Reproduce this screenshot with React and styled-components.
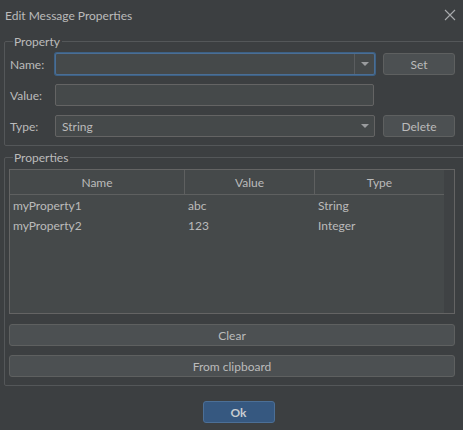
import React from 'react';
import styled, { createGlobalStyle } from 'styled-components';

const GlobalStyle = createGlobalStyle`
  html, body {
    margin: 0;
    padding: 0;
    background: #3c3f41;
  }
  * {
    box-sizing: border-box;
  }
`;

const Dialog = styled.div`
  width: 463px;
  height: 430px;
  overflow: hidden;
  background: #3c3f41;
  color: #bbbbbb;
  font-family: Lato, 'Noto Sans', sans-serif;
  font-size: 12px;
  display: flex;
  flex-direction: column;
`;

const TitleBar = styled.div`
  height: 30px;
  flex: 0 0 30px;
  display: flex;
  align-items: center;
  justify-content: space-between;
  padding: 0 7px 0 5px;
  font-size: 12px;
  color: #bbbbbb;
`;

const CloseButton = styled.button`
  width: 12px;
  height: 12px;
  padding: 0;
  border: 0;
  background: none;
  display: flex;
`;

const Content = styled.div`
  padding: 4px 0 0 4px;
  display: flex;
  flex-direction: column;
`;

const Group = styled.fieldset`
  margin: ${p => p.$top || 0}px -20px 0 0;
  padding: 4px 0 8px 4px;
  border: 1px solid #545759;
  border-radius: 2px;
  min-width: 0;
  display: flex;
  flex-direction: column;
  gap: 9px;
`;

const Legend = styled.legend`
  padding: 0 2px 0 1px;
  margin-left: 4px;
  line-height: 15px;
  font-size: 12px;
  color: #bbbbbb;
`;

const FieldRow = styled.div`
  display: grid;
  grid-template-columns: 46px 320px 72px;
  align-items: center;
  height: 22px;
`;

const Label = styled.label`
  padding-left: 1px;
`;

const Field = styled.div`
  height: 22px;
  width: ${p => p.$width || 320}px;
  background: #45494a;
  border: 1px solid ${p => (p.$focused ? '#4a6e95' : '#646464')};
  border-radius: 2px;
  box-shadow: ${p => (p.$focused ? '0 0 0 1px #3d6185' : 'none')};
  display: flex;
  align-items: center;
  padding-left: 6px;
`;

const FieldText = styled.span`
  flex: 1;
`;

const ArrowBox = styled.div`
  width: 20px;
  height: 100%;
  display: flex;
  align-items: center;
  justify-content: center;
  border-left: 1px solid ${p => (p.$divided ? '#5a5d5f' : 'transparent')};
`;

const Arrow = styled.div`
  width: 0;
  height: 0;
  border-left: 4px solid transparent;
  border-right: 4px solid transparent;
  border-top: 4px solid #9a9c9e;
`;

const Button = styled.button`
  height: 22px;
  width: ${p => (p.$full ? '446px' : '72px')};
  margin-left: ${p => (p.$full ? 0 : 8)}px;
  background: ${p => (p.$primary ? '#365880' : '#4c5052')};
  border: 1px solid ${p => (p.$primary ? '#4c6f96' : '#5e6060')};
  border-radius: 3px;
  color: ${p => (p.$primary ? '#c8ccd0' : '#bbbbbb')};
  font-family: inherit;
  font-size: 12px;
  font-weight: ${p => (p.$primary ? 700 : 400)};
  padding: 0;
`;

const Table = styled.div`
  width: 446px;
  height: 145px;
  border: 1px solid #646464;
  background: #45494a;
  display: flex;
`;

const Viewport = styled.div`
  width: 434px;
  display: flex;
  flex-direction: column;
`;

const ScrollTrack = styled.div`
  width: 10px;
  background: #3f4244;
`;

const Cols = styled.div`
  display: grid;
  grid-template-columns: 175px 130px 129px;
  height: ${p => (p.$header ? 25 : 20)}px;
  border-bottom: ${p => (p.$header ? '1px solid #5e6060' : 'none')};
`;

const HeadCell = styled.div`
  display: flex;
  align-items: center;
  justify-content: center;
  border-right: ${p => (p.$last ? 'none' : '1px solid #5e6060')};
`;

const Cell = styled.div`
  display: flex;
  align-items: center;
  padding: 1px 0 0 3px;
`;

const Footer = styled.div`
  display: flex;
  justify-content: center;
  padding: 15px 0 0 2px;
`;

const rows = [
  { name: 'myProperty1', value: 'abc', type: 'String' },
  { name: 'myProperty2', value: '123', type: 'Integer' },
];

const Combo = ({ text, focused }) => (
  <Field $focused={focused}>
    <FieldText>{text}</FieldText>
    <ArrowBox $divided={focused}>
      <Arrow />
    </ArrowBox>
  </Field>
);

export default function App() {
  return (
    <Dialog>
      <GlobalStyle />
      <TitleBar>
        <span>Edit Message Properties</span>
        <CloseButton aria-label="Close">
          <svg width="12" height="12" viewBox="0 0 12 12">
            <path d="M1 1 L11 11 M11 1 L1 11" stroke="#a9abad" strokeWidth="1.1" />
          </svg>
        </CloseButton>
      </TitleBar>
      <Content>
        <Group>
          <Legend>Property</Legend>
          <FieldRow>
            <Label>Name:</Label>
            <Combo focused text="" />
            <Button>Set</Button>
          </FieldRow>
          <FieldRow>
            <Label>Value:</Label>
            <Field $width={319} />
          </FieldRow>
          <FieldRow>
            <Label>Type:</Label>
            <Combo text="String" />
            <Button>Delete</Button>
          </FieldRow>
        </Group>
        <Group $top={4}>
          <Legend>Properties</Legend>
          <Table>
            <Viewport>
              <Cols $header>
                <HeadCell>Name</HeadCell>
                <HeadCell>Value</HeadCell>
                <HeadCell $last>Type</HeadCell>
              </Cols>
              {rows.map(r => (
                <Cols key={r.name}>
                  <Cell>{r.name}</Cell>
                  <Cell>{r.value}</Cell>
                  <Cell>{r.type}</Cell>
                </Cols>
              ))}
            </Viewport>
            <ScrollTrack />
          </Table>
          <Button $full style={{ marginTop: 1 }}>Clear</Button>
          <Button $full>From clipboard</Button>
        </Group>
        <Footer>
          <Button $primary>Ok</Button>
        </Footer>
      </Content>
    </Dialog>
  );
}
